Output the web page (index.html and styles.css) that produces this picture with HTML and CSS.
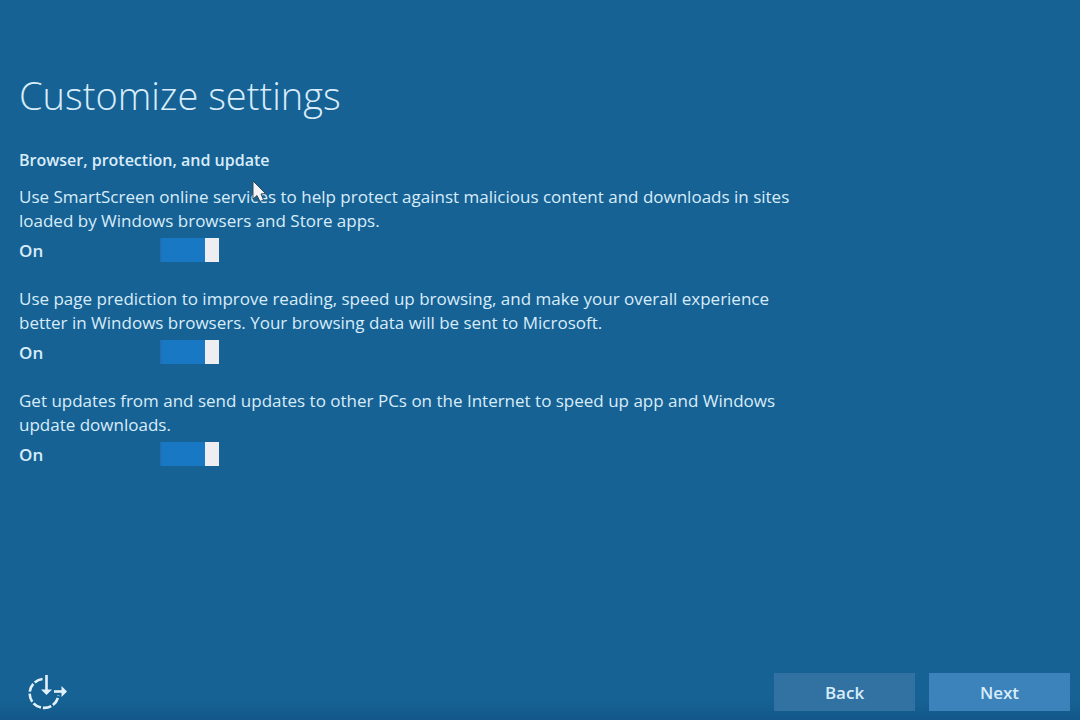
FILE: index.html
```html
<!DOCTYPE html>
<html lang="en">
<head>
    <meta charset="UTF-8">
    <meta name="viewport" content="width=device-width, initial-scale=1.0">
    <title>Customize settings</title>
    <link rel="stylesheet" href="styles.css">
</head>
<body>
    <main>
        <h1>Customize settings</h1>
        <h2>Browser, protection, and update</h2>

        <div class="setting">
            <p id="smartscreen-text">Use SmartScreen online services to help protect against malicious content and downloads in sites loaded by Windows browsers and Store apps.</p>
            <div class="switch-row">
                <label for="smartscreen">On</label>
                <input type="checkbox" class="switch" id="smartscreen" aria-describedby="smartscreen-text" checked>
            </div>
            <svg class="cursor" viewBox="0 0 14 24" aria-hidden="true">
                <path d="M1 1 L1 19 L5 15.500 L8 21.500 L11.500 20 L9 14 L13.500 13.500 Z" fill="#f4f4f6" stroke="#34495c" stroke-width="1"/>
            </svg>
        </div>

        <div class="setting">
            <p id="prediction-text">Use page prediction to improve reading, speed up browsing, and make your overall experience better in Windows browsers. Your browsing data will be sent to Microsoft.</p>
            <div class="switch-row">
                <label for="prediction">On</label>
                <input type="checkbox" class="switch" id="prediction" aria-describedby="prediction-text" checked>
            </div>
        </div>

        <div class="setting">
            <p id="updates-text">Get updates from and send updates to other PCs on the Internet to speed up app and Windows update downloads.</p>
            <div class="switch-row">
                <label for="updates">On</label>
                <input type="checkbox" class="switch" id="updates" aria-describedby="updates-text" checked>
            </div>
        </div>
    </main>

    <footer>
        <button type="button" class="ease" aria-label="Ease of access">
            <svg viewBox="0 0 40 36" fill="none" stroke="#e3f1fb" stroke-width="2.6">
                <path d="M14.500 5 A14.500 14.500 0 1 0 30.500 21.500" stroke-dasharray="8.600 2"/>
                <path d="M18.500 1 V17"/>
                <path d="M26 17.500 H35"/>
                <path d="M13 15.500 H24 L18.500 21 Z" fill="#e3f1fb" stroke="none"/>
                <path d="M33.500 12 V23 L39 17.500 Z" fill="#e3f1fb" stroke="none"/>
            </svg>
        </button>
        <div class="buttons">
            <button type="button" class="btn">Back</button>
            <button type="button" class="btn next">Next</button>
        </div>
    </footer>
</body>
</html>
```

FILE: styles.css
```css
* {
    box-sizing: border-box;
}
body {
    margin: 0;
    min-height: 100vh;
    display: flex;
    flex-direction: column;
    background: linear-gradient(#166294 calc(100% - 20px), #135789);
    color: #d9ecfa;
    font-family: "Open Sans", "Noto Sans", sans-serif;
    font-size: 17px;
    line-height: 24px;
}
main {
    flex: 1;
    padding: 68px 19px 0;
}
h1 {
    margin: 0 0 26px;
    font-size: 38px;
    font-weight: 300;
    line-height: 54px;
}
h2 {
    margin: 0 0 13px;
    font-size: 16px;
    font-weight: 600;
    line-height: 24px;
}
.setting {
    position: relative;
    max-width: 780px;
    margin-bottom: 24px;
}
.setting p {
    margin: 0 0 5px;
}
.switch-row {
    display: flex;
    align-items: flex-start;
}
.switch-row label {
    width: 141px;
    padding-top: 1px;
    font-weight: 600;
}
.switch {
    appearance: none;
    width: 59px;
    height: 24px;
    margin: 0;
    border-left: 2px solid #1f6fb4;
    background: linear-gradient(to left, #eeeef2 14px, #1878c4 14px);
    cursor: pointer;
}
.switch:not(:checked) {
    background: linear-gradient(to right, #eeeef2 14px, #4a7ea5 14px);
}
.cursor {
    position: absolute;
    top: -5px;
    left: 233px;
    width: 14px;
    height: 24px;
}
footer {
    display: flex;
    justify-content: space-between;
    align-items: center;
    padding: 0 10px 9px 28px;
}
.ease {
    padding: 0;
    border: none;
    background: none;
    cursor: pointer;
}
.ease svg {
    display: block;
    width: 40px;
    height: 36px;
}
.buttons {
    display: flex;
    gap: 14px;
}
.btn {
    width: 141px;
    height: 38px;
    border: none;
    background: #3272a3;
    color: #d9ecfa;
    font-family: inherit;
    font-size: 17px;
    font-weight: 600;
    cursor: pointer;
}
.next {
    background: #3c82bb;
}
```
